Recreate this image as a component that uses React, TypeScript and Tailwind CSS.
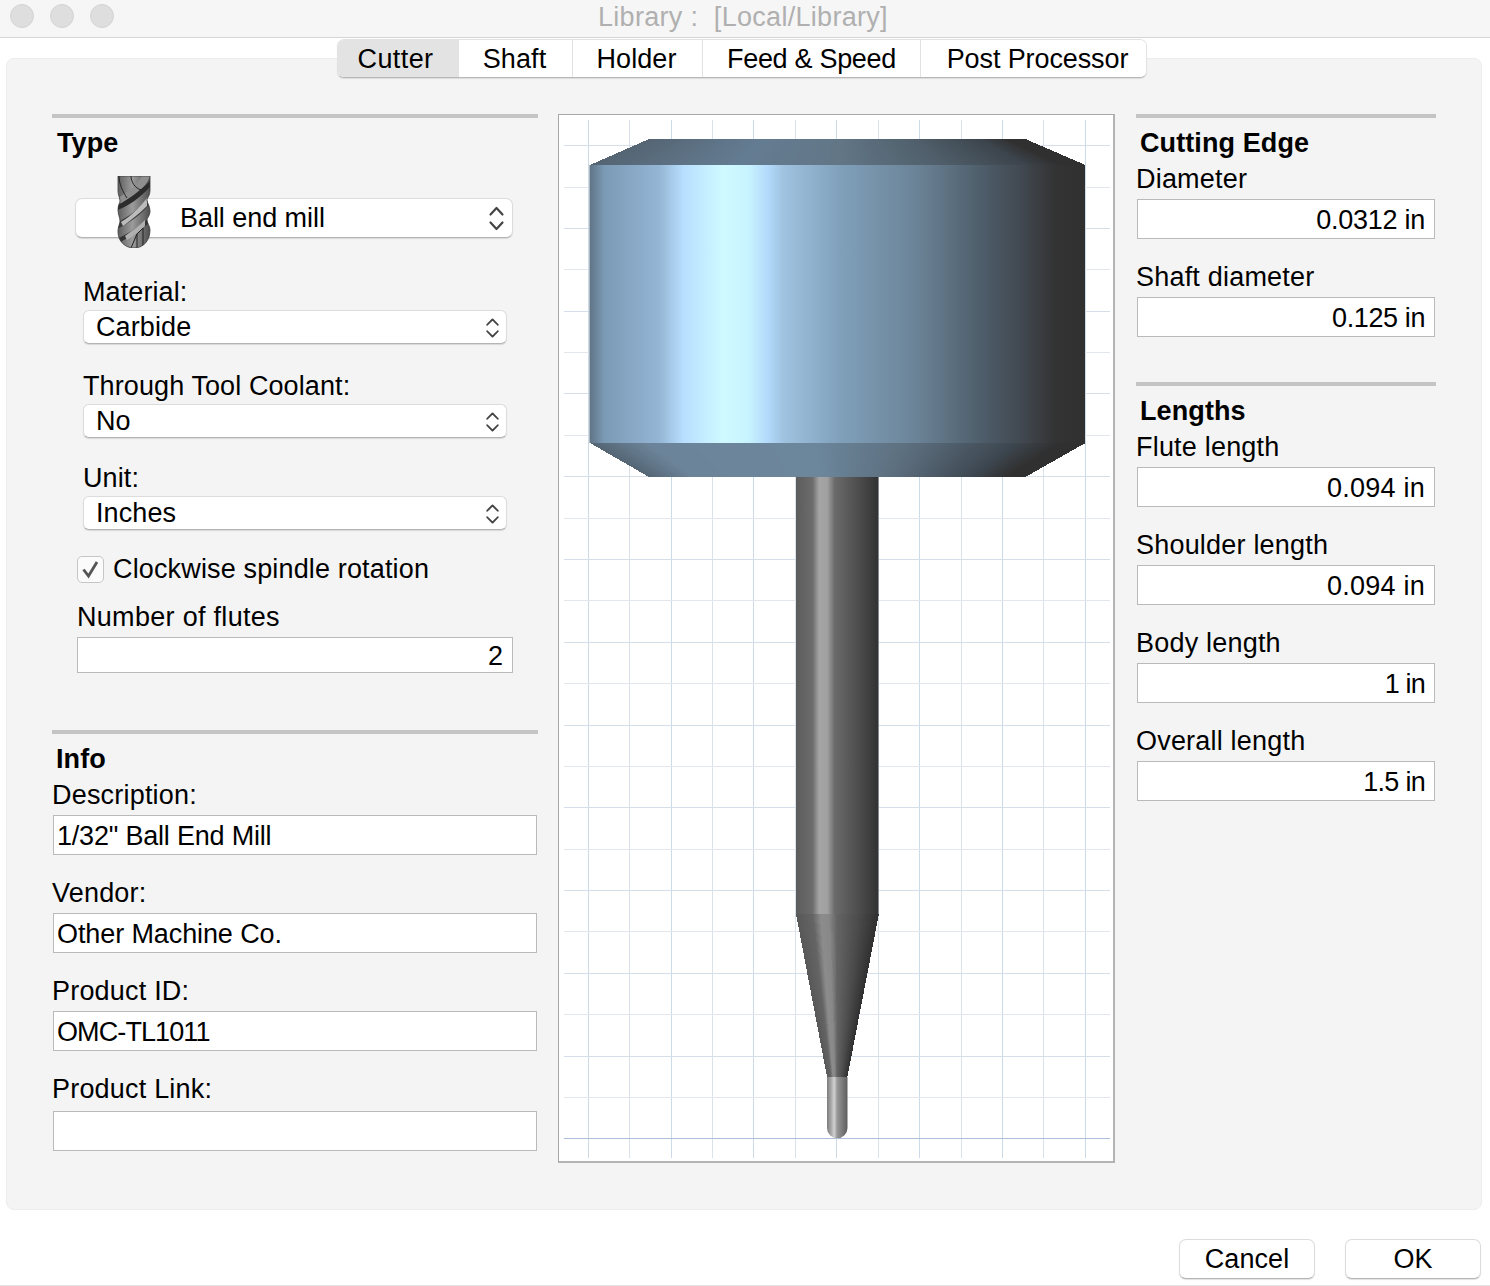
import React from 'react';

type Stop = [number, number, number, number];

// shading ramps: position 0-1 across the body, then rgb
const bodyRamp: Stop[] = [
  [0, 95, 115, 133], [0.03, 123, 154, 181], [0.14, 148, 181, 212], [0.19, 184, 223, 255],
  [0.27, 207, 250, 255], [0.32, 200, 244, 255], [0.36, 179, 218, 251], [0.39, 160, 195, 225],
  [0.51, 127, 159, 185], [0.66, 107, 131, 151], [0.8, 76, 91, 103], [0.88, 64, 70, 78],
  [0.94, 51, 51, 51], [1, 48, 48, 48],
];
const chamferTopRamp: Stop[] = [
  [0, 84, 100, 114], [0.3, 100, 124, 146], [0.5, 98, 118, 134], [0.7, 80, 96, 108], [0.88, 60, 68, 76], [0.95, 48, 48, 48], [1, 48, 48, 48],
];
const chamferBottomRamp: Stop[] = [
  [0, 84, 102, 116], [0.12, 108, 132, 154], [0.45, 108, 134, 156], [0.65, 92, 110, 126], [0.85, 62, 72, 82], [0.95, 48, 48, 48], [1, 48, 48, 48],
];
const shaftRamp: Stop[] = [
  [0, 92, 92, 92], [0.2, 108, 108, 108], [0.28, 165, 165, 165], [0.38, 160, 160, 160], [0.47, 106, 106, 106], [0.75, 78, 78, 78], [1, 50, 50, 50],
];
const coneRamp: Stop[] = [
  [0, 88, 88, 88], [0.2, 100, 100, 100], [0.3, 140, 140, 140], [0.4, 136, 136, 136], [0.5, 100, 100, 100], [0.75, 76, 76, 76], [1, 48, 48, 48],
];

const colorAt = (ramp: Stop[], t: number) => {
  for (let i = 1; i < ramp.length; i++) {
    if (t <= ramp[i][0]) {
      const a = ramp[i - 1];
      const b = ramp[i];
      const k = (t - a[0]) / (b[0] - a[0]);
      const c = [1, 2, 3].map(n => Math.round(a[n] + (b[n] - a[n]) * k));
      return `rgb(${c[0]},${c[1]},${c[2]})`;
    }
  }
  const l = ramp[ramp.length - 1];
  return `rgb(${l[1]},${l[2]},${l[3]})`;
};

// one solid quad per shade step, so the highlight follows the taper
const Strips: React.FC<{ ramp: Stop[]; y1: number; y2: number; a1: number; a2: number; b1: number; b2: number; n?: number }> = ({ ramp, y1, y2, a1, a2, b1, b2, n = 120 }) => (
  <g shapeRendering="crispEdges">
    {Array.from({ length: n }, (_, i) => {
      const s = i / n;
      const e = (i + 1) / n;
      const pts = [
        [a1 + (a2 - a1) * s, y1], [a1 + (a2 - a1) * e + 0.4, y1],
        [b1 + (b2 - b1) * e + 0.4, y2], [b1 + (b2 - b1) * s, y2],
      ].map(p => p.join(',')).join(' ');
      return <polygon key={i} points={pts} fill={colorAt(ramp, (s + e) / 2)} />;
    })}
  </g>
);

const verticals = Array.from({ length: 13 }, (_, i) => Math.floor(588.3 + i * 41.42) + 0.5);
const horizontals = Array.from({ length: 25 }, (_, i) => Math.floor(1138.8 - i * 41.38) + 0.5);

const ToolPreview = () => (
  <svg className="w-full h-full block" viewBox="559 115 554 1046">
    <defs>
      <linearGradient id="body" x1="0" x2="1" y1="0" y2="0">
        {bodyRamp.map((s, i) => (
          <stop key={i} offset={s[0]} stopColor={`rgb(${s[1]},${s[2]},${s[3]})`} />
        ))}
      </linearGradient>
      <linearGradient id="shaft" x1="0" x2="1" y1="0" y2="0">
        {shaftRamp.map((s, i) => (
          <stop key={i} offset={s[0]} stopColor={`rgb(${s[1]},${s[2]},${s[3]})`} />
        ))}
      </linearGradient>
      <linearGradient id="tip" x1="0" x2="1" y1="0" y2="0">
        <stop offset="0" stopColor="#7c7c7c" />
        <stop offset="0.2" stopColor="#a8a8a8" />
        <stop offset="0.35" stopColor="#d2d2d2" />
        <stop offset="0.5" stopColor="#969696" />
        <stop offset="1" stopColor="#5e5e5e" />
      </linearGradient>
    </defs>
    {verticals.map((x, i) => (
      <line key={i} x1={x} x2={x} y1={120} y2={1158} stroke={i % 2 === 0 ? '#ccd9e6' : '#d9e2eb'} strokeWidth={1} />
    ))}
    {horizontals.map((y, i) => (
      <line key={i} x1={564} x2={1110} y1={y} y2={y} stroke={i === 0 ? '#adbedb' : i % 2 === 0 ? '#d5dfe9' : '#e2e6ed'} strokeWidth={1} />
    ))}
    <Strips ramp={chamferTopRamp} y1={139} y2={165} a1={649} a2={1025} b1={590} b2={1085} />
    <rect x={589.5} y={165} width={495.5} height={278} fill="url(#body)" />
    <Strips ramp={chamferBottomRamp} y1={443} y2={477} a1={590} a2={1085} b1={649} b2={1025} />
    <rect x={796} y={477} width={82.5} height={437} fill="url(#shaft)" />
    <Strips ramp={coneRamp} y1={914} y2={1077} a1={796} a2={878.5} b1={827} b2={847} n={80} />
    <path d="M827 1077 H847.5 V1128 A10.25 10.25 0 0 1 827 1128 Z" fill="url(#tip)" />
  </svg>
);

// ball end mill thumbnail in the type dropdown
const EndMillIcon = () => (
  <svg className="absolute left-[41px] top-[-23px]" width="34" height="72" viewBox="0 0 34 72">
    <defs>
      <clipPath id="mill">
        <path d="M1 0 H33 V14 C33 20 30 22 30 24 C30 27 33 30 33 35 C33 40 30 42 30 44 C30 47 33 50 33 54 C33 65 26 72 17 72 C8 72 1 65 1 56 C1 50 3 48 3 45 C3 42 1 38 1 34 C1 29 3 27 3 25 C3 22 1 19 1 15 Z" />
      </clipPath>
      <linearGradient id="millBase" x1="0" x2="1" y1="0" y2="0">
        <stop offset="0" stopColor="#5a5a5a" />
        <stop offset="0.45" stopColor="#9c9c9c" />
        <stop offset="1" stopColor="#4a4a4a" />
      </linearGradient>
    </defs>
    <g clipPath="url(#mill)">
      <rect width="34" height="72" fill="url(#millBase)" />
      <path d="M-2 24 C8 18 20 10 26 -2 L34 -2 C28 14 14 24 -2 34 Z" fill="#8f8f8f" />
      <path d="M-2 30 C12 24 26 12 36 2 L36 7 C26 20 12 30 -2 35 Z" fill="#2c2c2c" />
      <path d="M-2 48 C10 42 24 32 36 18 L36 23 C28 36 14 46 0 53 Z" fill="#3b3b3b" />
      <path d="M4 46 C14 40 22 32 30 22 L30 30 C22 38 14 44 6 50 Z" fill="#bcbcbc" />
      <path d="M-2 64 C10 58 24 50 36 38 L36 43 C26 54 14 60 2 67 Z" fill="#333333" />
      <path d="M8 60 C16 54 22 50 28 44 L28 50 C22 56 16 60 10 64 Z" fill="#b0b0b0" />
      <path d="M2 0 C2 8 6 16 10 22 M14 0 C14 6 18 12 24 14 M20 72 V58 L26 52 V70 M14 72 L20 58" stroke="#222222" strokeWidth="1" fill="none" />
    </g>
    <path d="M1 0 H33 V14 C33 20 30 22 30 24 C30 27 33 30 33 35 C33 40 30 42 30 44 C30 47 33 50 33 54 C33 65 26 72 17 72 C8 72 1 65 1 56 C1 50 3 48 3 45 C3 42 1 38 1 34 C1 29 3 27 3 25 C3 22 1 19 1 15 Z" fill="none" stroke="#3a3a3a" strokeWidth="0.8" />
  </svg>
);

const Chevrons: React.FC<{ large?: boolean }> = ({ large }) => (
  <svg className={large ? 'absolute right-[7px] top-[6px]' : 'absolute right-[6px] top-[6px]'} width={large ? 17 : 15} height={large ? 27 : 22} viewBox="0 0 17 27" preserveAspectRatio="none" fill="none" stroke="#444444" strokeWidth="2.2" strokeLinecap="round" strokeLinejoin="round">
    <path d="M2.5 9.5 L8.5 3 L14.5 9.5" />
    <path d="M2.5 17.5 L8.5 24 L14.5 17.5" />
  </svg>
);

const Select: React.FC<{ value: string }> = ({ value }) => (
  <div className="relative h-[34px] w-[424px] ml-[31px] pl-[12px] bg-white rounded-[6px] border border-[#dcdcdc] border-b-[#b4b4b4] shadow-[0_1px_1px_rgba(0,0,0,0.12)] leading-[32px]">
    {value}
    <Chevrons />
  </div>
);

const Label: React.FC<{ children: React.ReactNode; className?: string }> = ({ children, className = '' }) => (
  <div className={`h-[36px] leading-[36px] whitespace-pre ${className}`}>{children}</div>
);

const Field: React.FC<{ label: string; value?: string; right?: boolean; className?: string; inputClass?: string; track?: string }> = ({ label, value = '', right, className = '', inputClass = 'mt-[2px]', track = '' }) => (
  <div className={className}>
    <Label className="tracking-[0.2px]">{label}</Label>
    <div className={`h-[40px] leading-[40px] bg-white border border-[#bababa] ${right ? 'w-[298px] ml-px text-right pr-[9px]' : 'w-[484px] ml-px pl-[3px]'} ${inputClass} ${track}`}>
      {value}
    </div>
  </div>
);

const tabs = [
  { label: 'Cutter', cls: 'w-[121px] pr-[6px] tracking-[0.4px] bg-[#e3e3e3]' },
  { label: 'Shaft', cls: 'w-[113px] pr-[2px] bg-white' },
  { label: 'Holder', cls: 'w-[130px] pr-[2px] bg-white border-l border-[#e2e2e2]' },
  { label: 'Feed & Speed', cls: 'w-[218px] tracking-[-0.3px] bg-white border-l border-[#e2e2e2]' },
  { label: 'Post Processor', cls: 'w-[227px] pl-[7px] tracking-[-0.1px] bg-white border-l border-[#e2e2e2]' },
];

const App: React.FC = () => {
  return (
    <div className="w-[1490px] h-[1286px] bg-white overflow-hidden text-black text-[27px] tracking-[0.1px] font-['Liberation_Sans',Arial,sans-serif]">
      {/* title bar */}
      <div className="h-[38px] bg-[#f6f6f6] border-b border-[#d6d6d6] flex items-start">
        <div className="flex gap-[16px] ml-[10px] mt-[4px]">
          <div className="w-[24px] h-[24px] rounded-full bg-[#dedede] border border-[#d4d4d4]" />
          <div className="w-[24px] h-[24px] rounded-full bg-[#dedede] border border-[#d4d4d4]" />
          <div className="w-[24px] h-[24px] rounded-full bg-[#dedede] border border-[#d4d4d4]" />
        </div>
        <div className="ml-[484px] text-[#b0b0b0] leading-[35px] whitespace-pre tracking-[0.3px]">Library :  [Local/Library]</div>
      </div>

      {/* tabs sit on top of the panel edge */}
      <div className="relative z-10 ml-[337px] mt-px flex w-[810px] h-[39px] bg-white rounded-[7px] border border-[#e2e2e2] border-b-[#b8b8b8] shadow-[0_1px_1px_rgba(0,0,0,0.1)] overflow-hidden">
        {tabs.map(t => (
          <div key={t.label} className={`h-full leading-[39px] text-center shrink-0 ${t.cls}`}>
            {t.label}
          </div>
        ))}
      </div>

      <div className="ml-[6px] mt-[-20px] w-[1476px] h-[1152px] bg-[#f4f4f4] rounded-[8px] border border-[#ececec] pl-[45px] pt-[55px] flex">
        {/* left column */}
        <div className="w-[486px] shrink-0">
          <div className="h-[4px] bg-[#c4c4c4]" />
          <Label className="mt-[7px] ml-[5px] font-bold">Type</Label>
          <div className="relative h-[40px] w-[438px] ml-[23px] mt-[37px] pl-[104px] bg-white rounded-[7px] border border-[#dcdcdc] border-b-[#b4b4b4] shadow-[0_1px_1px_rgba(0,0,0,0.12)] leading-[38px] tracking-[-0.05px]">
            Ball end mill
            <EndMillIcon />
            <Chevrons large />
          </div>
          <Label className="mt-[36px] ml-[31px]">Material:</Label>
          <Select value="Carbide" />
          <Label className="mt-[24px] ml-[31px]">Through Tool Coolant:</Label>
          <Select value="No" />
          <Label className="mt-[22px] ml-[31px]">Unit:</Label>
          <Select value="Inches" />
          <div className="mt-[21px] h-[36px] ml-[25px] flex items-center">
            <div className="w-[27px] h-[27px] bg-[#fbfbfb] rounded-[5px] border border-[#c6c6c6] flex items-center justify-center">
              <svg width="19" height="19" viewBox="0 0 19 19" fill="none" stroke="#555555" strokeWidth="2.8">
                <path d="M2.5 9.5 L7.5 16 L16 2" />
              </svg>
            </div>
            <span className="ml-[9px] whitespace-pre tracking-[0.15px]">Clockwise spindle rotation</span>
          </div>
          <Label className="mt-[12px] ml-[25px] tracking-[0.3px]">Number of flutes</Label>
          <div className="mt-[2px] ml-[25px] w-[436px] h-[36px] leading-[36px] bg-white border border-[#bababa] text-right pr-[9px]">2</div>

          <div className="mt-[57px] h-[4px] bg-[#c4c4c4]" />
          <Label className="mt-[7px] ml-[4px] font-bold">Info</Label>
          <Field label="Description:" value={'1/32" Ball End Mill'} track="tracking-[-0.2px]" />
          <Field label="Vendor:" value="Other Machine Co." className="mt-[20px]" track="tracking-[-0.1px]" />
          <Field label="Product ID:" value="OMC-TL1011" className="mt-[20px]" track="tracking-[-0.9px]" />
          <Field label="Product Link:" className="mt-[20px]" inputClass="mt-[4px]" />
        </div>

        {/* tool preview */}
        <div className="w-[557px] h-[1049px] ml-[20px] shrink-0 bg-white border border-[#a8a8a8] border-r-2 border-b-2 border-r-[#b4b4b4] border-b-[#b4b4b4]">
          <ToolPreview />
        </div>

        {/* right column */}
        <div className="w-[300px] ml-[21px] shrink-0">
          <div className="h-[4px] bg-[#c4c4c4]" />
          <Label className="mt-[7px] ml-[4px] font-bold">Cutting Edge</Label>
          <Field right label="Diameter" value="0.0312 in" track="tracking-[-0.25px]" />
          <Field right label="Shaft diameter" value="0.125 in" className="mt-[20px]" track="tracking-[-0.4px]" />
          <div className="mt-[45px] h-[4px] bg-[#c4c4c4]" />
          <Label className="mt-[7px] ml-[4px] font-bold">Lengths</Label>
          <Field right label="Flute length" value="0.094 in" track="tracking-[0.25px]" />
          <Field right label="Shoulder length" value="0.094 in" className="mt-[20px]" track="tracking-[0.25px]" />
          <Field right label="Body length" value="1 in" className="mt-[20px]" track="tracking-[-0.8px]" />
          <Field right label="Overall length" value="1.5 in" className="mt-[20px]" track="tracking-[-0.7px]" />
        </div>
      </div>

      <div className="mt-[29px] pr-[9px] flex justify-end gap-[30px]">
        <div className="w-[136px] h-[40px] leading-[39px] text-center bg-white rounded-[7px] border border-[#dcdcdc] border-b-[#b4b4b4] shadow-[0_1px_1px_rgba(0,0,0,0.12)]">Cancel</div>
        <div className="w-[136px] h-[40px] leading-[39px] text-center bg-white rounded-[7px] border border-[#dcdcdc] border-b-[#b4b4b4] shadow-[0_1px_1px_rgba(0,0,0,0.12)]">OK</div>
      </div>
      <div className="mt-[6px] h-px bg-[#e4e4e4]" />
    </div>
  );
};

export default App;
